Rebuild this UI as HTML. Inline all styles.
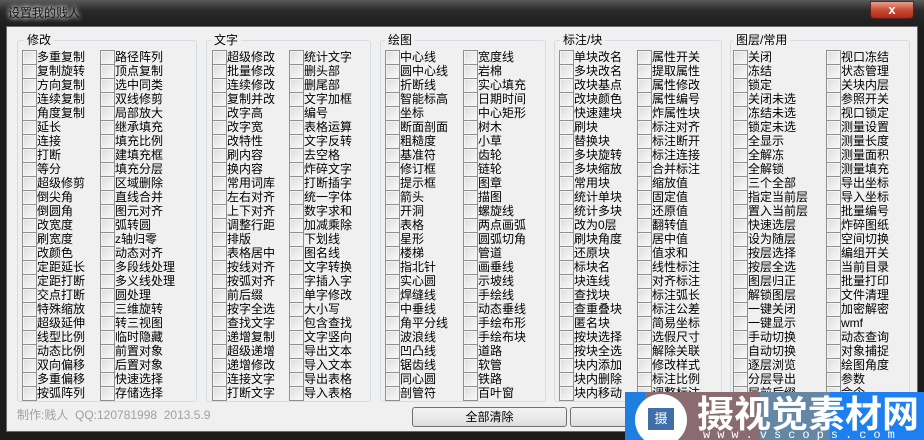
<!DOCTYPE html>
<html><head><meta charset="utf-8"><style>
*{margin:0;padding:0;box-sizing:border-box}
body{width:924px;height:440px;overflow:hidden;background:#1c1c1c;font-family:"Liberation Sans","Noto Sans CJK SC",sans-serif;font-size:12px;color:#000;position:relative}
.tb{position:absolute;left:0;top:0;width:924px;height:26px;background:linear-gradient(#5a5a5a,#2a2a2a 40%,#1e1e1e)}
.tt{position:absolute;left:8px;top:4px;font-size:12px;color:#111;text-shadow:0 0 4px #fff,0 0 6px #fff}
.x{position:absolute;left:870px;top:1px;width:44px;height:18px;border:1px solid #5a2020;border-radius:0 0 4px 4px;background:linear-gradient(#e8a090,#c84b32 50%,#b02a18);color:#fff;font-weight:bold;text-align:center;line-height:16px;font-size:13px}
.cl{position:absolute;left:6px;top:26px;width:912px;height:406px;background:#f0f0f0;border:1px solid #6a6a6a}
.g{position:absolute;top:40px;height:362px;border:1px solid #d5dde2;border-radius:3px}
.lg{position:absolute;top:33px;background:#f0f0f0;padding:0 3px;line-height:14px}
.c{position:absolute;top:50px}
.c i{display:block;font-style:normal;height:14px;line-height:14px;padding-left:15px;position:relative;white-space:nowrap}
.c i:before{content:"";position:absolute;left:0;top:0;width:13px;height:13px;border:1px solid #8e8f8f;background:linear-gradient(135deg,#dcdcdc,#fbfbfb);box-shadow:inset 0 0 0 1px #f4f4f4}
.ft{position:absolute;left:17px;top:406px;color:#a0a0a0;white-space:pre}
.bt{position:absolute;top:407px;height:20px;border:1px solid #707070;border-radius:3px;background:linear-gradient(#f2f2f2,#ebebeb 50%,#dcdcdc);text-align:center;line-height:18px}
.wm{position:absolute;left:625px;top:392px;width:299px;height:48px;overflow:hidden;background:linear-gradient(90deg,#1e7fe0 0,#1e7fe0 20px,#8a6b70 20px,#8a6b70 135px,#6487a6 135px,#6487a6 205px,#1e80f0 205px)}
.wm b{position:absolute;left:72px;top:-6px;color:#fff;font-size:37px;font-weight:bold;font-family:"Noto Sans CJK SC",sans-serif;white-space:nowrap;line-height:50px}
.wm s{text-decoration:none;position:absolute;left:78px;top:36px;color:#fff;font-size:12px;letter-spacing:7px;font-family:"Liberation Mono",monospace;white-space:nowrap}
.wm u{position:absolute;left:10px;top:2px;width:52px;height:52px;border-radius:50%;background:#fff;text-decoration:none}
.wm u:after{content:"摄";position:absolute;left:13px;top:14px;width:26px;height:22px;background:#3f6ea8;color:#fff;font-size:13px;text-align:center;line-height:22px}
</style></head><body>
<div class="tb"><div class="tt">设置我的贱人</div><div class="x">x</div></div>
<div class="cl"></div>
<div class="g" style="left:17px;width:180px"></div><div class="lg" style="left:24px">修改</div>
<div class="g" style="left:206px;width:165px"></div><div class="lg" style="left:211px">文字</div>
<div class="g" style="left:380px;width:166px"></div><div class="lg" style="left:385px">绘图</div>
<div class="g" style="left:554px;width:168px"></div><div class="lg" style="left:560px">标注/块</div>
<div class="g" style="left:730px;width:180px"></div><div class="lg" style="left:733px">图层/常用</div>

<div class="c" style="left:22px"><i>多重复制</i><i>复制旋转</i><i>方向复制</i><i>连续复制</i><i>角度复制</i><i>延长</i><i>连接</i><i>打断</i><i>等分</i><i>超级修剪</i><i>倒尖角</i><i>倒圆角</i><i>改宽度</i><i>刷宽度</i><i>改颜色</i><i>定距延长</i><i>定距打断</i><i>交点打断</i><i>特殊缩放</i><i>超级延伸</i><i>线型比例</i><i>动态比例</i><i>双向偏移</i><i>多重偏移</i><i>按弧阵列</i></div>
<div class="c" style="left:100px"><i>路径阵列</i><i>顶点复制</i><i>选中同类</i><i>双线修剪</i><i>局部放大</i><i>继承填充</i><i>填充比例</i><i>建填充框</i><i>填充分层</i><i>区域删除</i><i>直线合并</i><i>图元对齐</i><i>弧转圆</i><i>z轴归零</i><i>动态对齐</i><i>多段线处理</i><i>多义线处理</i><i>圆处理</i><i>三维旋转</i><i>转三视图</i><i>临时隐藏</i><i>前置对象</i><i>后置对象</i><i>快速选择</i><i>存储选择</i></div>
<div class="c" style="left:212px"><i>超级修改</i><i>批量修改</i><i>连续修改</i><i>复制并改</i><i>改字高</i><i>改字宽</i><i>改特性</i><i>刷内容</i><i>换内容</i><i>常用词库</i><i>左右对齐</i><i>上下对齐</i><i>调整行距</i><i>排版</i><i>表格居中</i><i>按线对齐</i><i>按弧对齐</i><i>前后缀</i><i>按字全选</i><i>查找文字</i><i>递增复制</i><i>超级递增</i><i>递增修改</i><i>连接文字</i><i>打断文字</i></div>
<div class="c" style="left:289px"><i>统计文字</i><i>删头部</i><i>删尾部</i><i>文字加框</i><i>编号</i><i>表格运算</i><i>文字反转</i><i>去空格</i><i>炸碎文字</i><i>打断插字</i><i>统一字体</i><i>数字求和</i><i>加减乘除</i><i>下划线</i><i>图名线</i><i>文字转换</i><i>字插入字</i><i>单字修改</i><i>大小写</i><i>包含查找</i><i>文字竖向</i><i>导出文本</i><i>导入文本</i><i>导出表格</i><i>导入表格</i></div>
<div class="c" style="left:385px"><i>中心线</i><i>圆中心线</i><i>折断线</i><i>智能标高</i><i>坐标</i><i>断面剖面</i><i>粗糙度</i><i>基准符</i><i>修订框</i><i>提示框</i><i>箭头</i><i>开洞</i><i>表格</i><i>星形</i><i>楼梯</i><i>指北针</i><i>实心圆</i><i>焊缝线</i><i>中垂线</i><i>角平分线</i><i>波浪线</i><i>凹凸线</i><i>锯齿线</i><i>同心圆</i><i>剖管符</i></div>
<div class="c" style="left:463px"><i>宽度线</i><i>岩棉</i><i>实心填充</i><i>日期时间</i><i>中心矩形</i><i>树木</i><i>小草</i><i>齿轮</i><i>链轮</i><i>图章</i><i>描图</i><i>螺旋线</i><i>两点画弧</i><i>圆弧切角</i><i>管道</i><i>画垂线</i><i>示坡线</i><i>手绘线</i><i>动态垂线</i><i>手绘布形</i><i>手绘布块</i><i>道路</i><i>软管</i><i>铁路</i><i>百叶窗</i></div>
<div class="c" style="left:559px"><i>单块改名</i><i>多块改名</i><i>改块基点</i><i>改块颜色</i><i>快速建块</i><i>刷块</i><i>替换块</i><i>多块旋转</i><i>多块缩放</i><i>常用块</i><i>统计单块</i><i>统计多块</i><i>改为0层</i><i>刷块角度</i><i>还原块</i><i>标块名</i><i>块连线</i><i>查找块</i><i>查重叠块</i><i>匿名块</i><i>按块选择</i><i>按块全选</i><i>块内添加</i><i>块内删除</i><i>块内移动</i></div>
<div class="c" style="left:637px"><i>属性开关</i><i>提取属性</i><i>属性修改</i><i>属性编号</i><i>炸属性块</i><i>标注对齐</i><i>标注断开</i><i>标注连接</i><i>合并标注</i><i>缩放值</i><i>固定值</i><i>还原值</i><i>翻转值</i><i>居中值</i><i>值求和</i><i>线性标注</i><i>对齐标注</i><i>标注弧长</i><i>标注公差</i><i>简易坐标</i><i>选假尺寸</i><i>解除关联</i><i>修改样式</i><i>标注比例</i><i>调整标注</i></div>
<div class="c" style="left:733px"><i>关闭</i><i>冻结</i><i>锁定</i><i>关闭未选</i><i>冻结未选</i><i>锁定未选</i><i>全显示</i><i>全解冻</i><i>全解锁</i><i>三个全部</i><i>指定当前层</i><i>置入当前层</i><i>快速选层</i><i>设为随层</i><i>按层选择</i><i>按层全选</i><i>图层归正</i><i>解锁图层</i><i>一键关闭</i><i>一键显示</i><i>手动切换</i><i>自动切换</i><i>逐层浏览</i><i>分层导出</i><i>层前后缀</i></div>
<div class="c" style="left:826px"><i>视口冻结</i><i>状态管理</i><i>关块内层</i><i>参照开关</i><i>视口锁定</i><i>测量设置</i><i>测量长度</i><i>测量面积</i><i>测量填充</i><i>导出坐标</i><i>导入坐标</i><i>批量编号</i><i>炸碎图纸</i><i>空间切换</i><i>编组开关</i><i>当前目录</i><i>批量打印</i><i>文件清理</i><i>加密解密</i><i>wmf</i><i>动态查询</i><i>对象捕捉</i><i>绘图角度</i><i>参数</i><i>命令</i></div>

<div class="ft">制作:贱人  QQ:120781998  2013.5.9</div>
<div class="bt" style="left:412px;width:155px">全部清除</div>
<div class="bt" style="left:570px;width:155px">确定</div>
<div class="wm"><u></u><b>摄视觉素材网</b><s>www.vscops.com</s></div>
</body></html>
